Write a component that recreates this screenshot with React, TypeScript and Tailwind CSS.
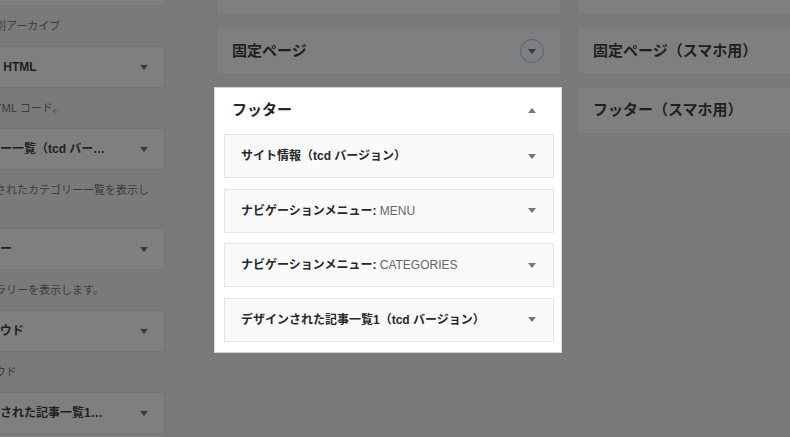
import React from "react";

const Tri = ({ up, className }: { up?: boolean; className?: string }) => (
  <svg width="8" height="5" viewBox="0 0 8 5" className={className}>
    <polygon points={up ? "0,5 8,5 4,0" : "0,0 8,0 4,5"} fill="currentColor" />
  </svg>
);

const available = [
  { title: "アーカイブ", desc: "投稿の月別アーカイブ" },
  { title: "カスタム HTML", desc: "任意の HTML コード。" },
  { title: "カテゴリー一覧（tcd バージョン）", desc: "デザインされたカテゴリー一覧を表示します。" },
  { title: "ギャラリー", desc: "画像ギャラリーを表示します。" },
  { title: "タグクラウド", desc: "タグクラウド" },
  { title: "デザインされた記事一覧1（tcd バージョン）", desc: "デザインされた記事一覧を表示します。" },
];

const footerWidgets: { name: string; sub?: string }[] = [
  { name: "サイト情報（tcd バージョン）" },
  { name: "ナビゲーションメニュー:", sub: "MENU" },
  { name: "ナビゲーションメニュー:", sub: "CATEGORIES" },
  { name: "デザインされた記事一覧1（tcd バージョン）" },
];

function DimPanel({ title, h, ring }: { title: string; h: string; ring?: boolean }) {
  return (
    <div className={`${h} bg-[#7f7f7f] border border-[#767676] flex items-center justify-between pl-[15px] pr-[17px]`}>
      <span className="text-[15px] font-bold text-[#1f1f1f] whitespace-nowrap">{title}</span>
      {ring && (
        <div className="w-[24px] h-[24px] rounded-full border-[1.5px] border-[#45658a] flex items-center justify-center pt-[1px]">
          <Tri className="text-[#36383b]" />
        </div>
      )}
    </div>
  );
}

export default function App() {
  return (
    <div className="relative w-[790px] h-[437px] overflow-hidden bg-[#7a7a7a] flex items-start font-['Liberation_Sans','Noto_Sans_CJK_JP',sans-serif] [text-spacing-trim:space-all]">
      {/* available widgets (dimmed) */}
      <div className="w-[230px] ml-[-65px] shrink-0 flex flex-col">
        {available.map((w, i) => (
          <div key={i} className={i === 0 ? "mt-[-36px]" : ""}>
            <div className="h-[42px] bg-[#7f7f7f] border border-[#767676] flex items-center px-[16px]">
              <span className="flex-1 min-w-0 truncate text-[12px] font-bold text-[#1f1f1f]">{w.title}</span>
              <div className="w-[42px] shrink-0 flex justify-end">
                <Tri className="text-[#36383b]" />
              </div>
            </div>
            <p className="pl-[16px] pr-[11px] py-[11px] leading-[18px] text-[11px] text-[#3b3b3b]">{w.desc}</p>
          </div>
        ))}
      </div>

      {/* sidebars middle */}
      <div className="w-[346px] ml-[51px] shrink-0 flex flex-col gap-[12px]">
        <div className="mt-[-33px]">
          <DimPanel title="サイドバー" h="h-[48px]" />
        </div>
        <DimPanel title="固定ページ" h="h-[48px]" ring />
        <div className="w-[348px] ml-[-2px] bg-white border border-[#d4d4d4] flex flex-col">
          <div className="h-[46px] flex items-center justify-between pl-[17px] pr-[25px] pb-[2px]">
            <span className="text-[15px] font-bold text-[#23282d]">フッター</span>
            <Tri up className="text-[#72777c]" />
          </div>
          <div className="pl-[9px] pr-[7px] pb-[10px] flex flex-col gap-[10.5px]">
            {footerWidgets.map((w, i) => (
              <div
                key={i}
                className="h-[44px] bg-[#fafafa] border border-[#e2e4e7] flex items-center justify-between pl-[16px] pr-[17px]"
              >
                <span className="text-[12px] font-bold text-[#23282d] whitespace-nowrap">
                  {w.name}
                  {w.sub && <span className="font-normal text-[#666]"> {w.sub}</span>}
                </span>
                <Tri className="text-[#72777c]" />
              </div>
            ))}
          </div>
        </div>
      </div>

      {/* sidebars right */}
      <div className="w-[346px] ml-[15px] shrink-0 flex flex-col gap-[12px]">
        <div className="mt-[-33px]">
          <DimPanel title="サイドバー（スマホ用）" h="h-[48px]" />
        </div>
        <DimPanel title="固定ページ（スマホ用）" h="h-[48px]" />
        <DimPanel title="フッター（スマホ用）" h="h-[47px]" />
      </div>
    </div>
  );
}
